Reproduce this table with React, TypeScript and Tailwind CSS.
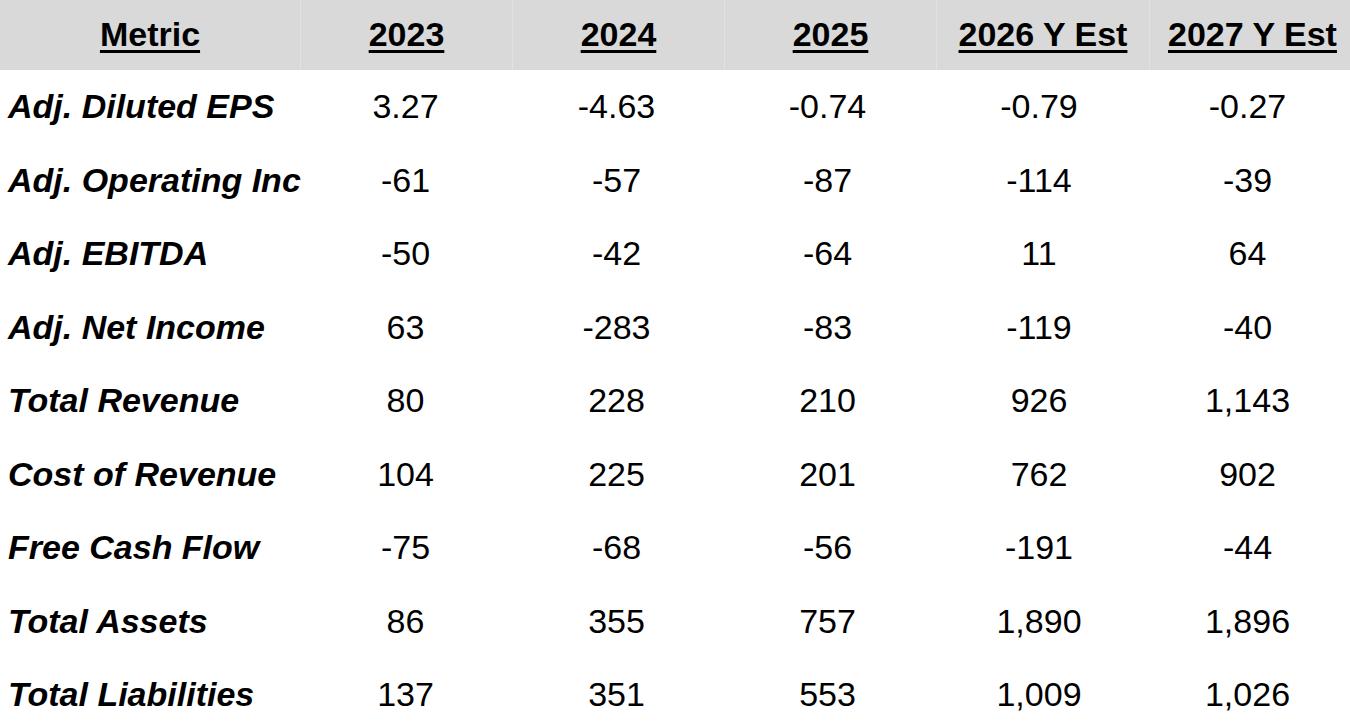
const HEADERS = ["Metric", "2023", "2024", "2025", "2026 Y Est", "2027 Y Est"];

const ROWS: [string, string[]][] = [
  ["Adj. Diluted EPS", ["3.27", "-4.63", "-0.74", "-0.79", "-0.27"]],
  ["Adj. Operating Inc", ["-61", "-57", "-87", "-114", "-39"]],
  ["Adj. EBITDA", ["-50", "-42", "-64", "11", "64"]],
  ["Adj. Net Income", ["63", "-283", "-83", "-119", "-40"]],
  ["Total Revenue", ["80", "228", "210", "926", "1,143"]],
  ["Cost of Revenue", ["104", "225", "201", "762", "902"]],
  ["Free Cash Flow", ["-75", "-68", "-56", "-191", "-44"]],
  ["Total Assets", ["86", "355", "757", "1,890", "1,896"]],
  ["Total Liabilities", ["137", "351", "553", "1,009", "1,026"]],
];

const COLS = "grid grid-cols-[300px_211px_211px_211px_212px_205px]";

export default function App() {
  return (
    <div className="h-[726px] w-[1350px] overflow-hidden bg-white font-['Liberation_Sans',Arial,sans-serif] text-[34px] text-black">
      <div className={`${COLS} h-[70px] gap-x-px bg-[#e2e2e2]`}>
        {HEADERS.map((h) => (
          <div key={h} className="flex items-center justify-center whitespace-nowrap bg-[#d9d9d9] pb-0.5">
            <span className="font-bold underline decoration-[2.5px] underline-offset-[4px]">{h}</span>
          </div>
        ))}
      </div>
      {ROWS.map(([label, values]) => (
        <div key={label} className={`${COLS} h-[73.5px]`}>
          <div className="flex items-center whitespace-nowrap pl-[8px] font-bold italic">{label}</div>
          {values.map((v, i) => (
            <div key={i} className="flex items-center justify-center">
              {v}
            </div>
          ))}
        </div>
      ))}
    </div>
  );
}
